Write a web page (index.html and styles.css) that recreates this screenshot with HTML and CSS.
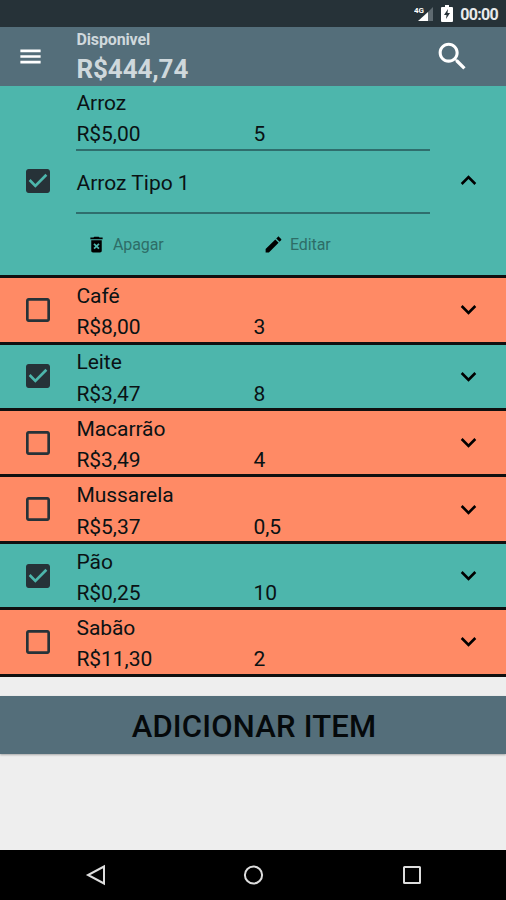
FILE: index.html
```
<!DOCTYPE html>
<html lang="pt-BR">

<head>
    <meta charset="UTF-8">
    <meta name="viewport" content="width=device-width, initial-scale=1.0">
    <title>Lista de Compras</title>
    <link rel="stylesheet" href="styles.css">
</head>

<body>
    <!-- Shared icons -->
    <svg class="sprite" width="0" height="0">
        <symbol id="box" viewBox="0 0 24 24"><path d="M19 5v14H5V5h14m0-2H5c-1.1 0-2 .9-2 2v14c0 1.1.9 2 2 2h14c1.1 0 2-.9 2-2V5c0-1.1-.9-2-2-2z"/></symbol>
        <symbol id="box-checked" viewBox="0 0 24 24"><path d="M19 3H5c-1.11 0-2 .9-2 2v14c0 1.1.89 2 2 2h14c1.11 0 2-.9 2-2V5c0-1.1-.89-2-2-2zm-9 14l-5-5 1.41-1.41L10 14.17l7.59-7.59L19 8l-9 9z"/></symbol>
        <symbol id="more" viewBox="0 0 24 24"><path d="M16.59 8.59L12 13.17 7.41 8.59 6 10l6 6 6-6z"/></symbol>
        <symbol id="less" viewBox="0 0 24 24"><path d="M12 8l-6 6 1.41 1.41L12 10.83l4.59 4.58L18 14z"/></symbol>
    </svg>

    <div class="status-bar">
        <svg class="signal" width="20" height="16" viewBox="0 0 20 16">
            <path d="M19 1v14h-5V6z" fill="#5f6a70"/>
            <path d="M14 6v9H4z" fill="#fff"/>
            <text x="0" y="7" class="network">4G</text>
        </svg>
        <svg class="battery" width="12" height="17" viewBox="0 0 12 17">
            <path d="M4 0h4v2h3q1 0 1 1v13q0 1-1 1H1q-1 0-1-1V3q0-1 1-1h3z" fill="#fff"/>
            <path d="M7 4L3 10h2.500l-.5 4 4-6H6.500z" fill="#263238"/>
        </svg>
        <span class="clock">00:00</span>
    </div>

    <div class="toolbar">
        <svg class="menu-icon" width="27" height="27" viewBox="0 0 24 24"><path d="M3 18.200h18v-2.400H3v2.400zm0-5h18v-2.400H3v2.400zm0-7.400v2.400h18V5.800H3z"/></svg>
        <div class="balance">
            <div class="balance-label">Disponivel</div>
            <div class="balance-value">R$444,74</div>
        </div>
        <svg class="search-icon" width="37" height="37" viewBox="0 0 24 24"><path d="M15.500 14h-.79l-.28-.27C15.410 12.590 16 11.110 16 9.500 16 5.910 13.090 3 9.500 3S3 5.910 3 9.500 5.910 16 9.500 16c1.610 0 3.090-.59 4.230-1.570l.27.28v.79l5 4.990L20.490 19l-4.990-5zm-6 0C7.010 14 5 11.990 5 9.500S7.010 5 9.500 5 14 7.010 14 9.500 11.990 14 9.500 14z"/></svg>
    </div>

    <div class="list">
        <div class="item checked expanded">
            <svg class="checkbox"><use href="#box-checked"/></svg>
            <div class="info">
                <div class="name">Arroz</div>
                <div class="values"><span>R$5,00</span><span>5</span></div>
                <div class="description">Arroz Tipo 1</div>
                <div class="actions">
                    <div class="action">
                        <svg width="21" height="21" viewBox="0 0 24 24"><path d="M6 19c0 1.100.9 2 2 2h8c1.100 0 2-.9 2-2V7H6v12zm2.460-7.120l1.410-1.410L12 12.590l2.120-2.120 1.410 1.410L13.410 14l2.120 2.120-1.410 1.410L12 15.410l-2.120 2.120-1.410-1.410L10.590 14l-2.130-2.120zM15.500 4l-1-1h-5l-1 1H5v2h14V4z"/></svg>
                        <span>Apagar</span>
                    </div>
                    <div class="action">
                        <svg width="21" height="21" viewBox="0 0 24 24"><path d="M3 17.250V21h3.750L17.810 9.940l-3.750-3.750L3 17.250zM20.710 7.040c.39-.39.39-1.020 0-1.410l-2.340-2.340c-.39-.39-1.020-.39-1.410 0l-1.830 1.830 3.750 3.750 1.830-1.830z"/></svg>
                        <span>Editar</span>
                    </div>
                </div>
            </div>
            <svg class="arrow"><use href="#less"/></svg>
        </div>

        <div class="item">
            <svg class="checkbox"><use href="#box"/></svg>
            <div class="info">
                <div class="name">Café</div>
                <div class="values"><span>R$8,00</span><span>3</span></div>
            </div>
            <svg class="arrow"><use href="#more"/></svg>
        </div>

        <div class="item checked">
            <svg class="checkbox"><use href="#box-checked"/></svg>
            <div class="info">
                <div class="name">Leite</div>
                <div class="values"><span>R$3,47</span><span>8</span></div>
            </div>
            <svg class="arrow"><use href="#more"/></svg>
        </div>

        <div class="item">
            <svg class="checkbox"><use href="#box"/></svg>
            <div class="info">
                <div class="name">Macarrão</div>
                <div class="values"><span>R$3,49</span><span>4</span></div>
            </div>
            <svg class="arrow"><use href="#more"/></svg>
        </div>

        <div class="item">
            <svg class="checkbox"><use href="#box"/></svg>
            <div class="info">
                <div class="name">Mussarela</div>
                <div class="values"><span>R$5,37</span><span>0,5</span></div>
            </div>
            <svg class="arrow"><use href="#more"/></svg>
        </div>

        <div class="item checked">
            <svg class="checkbox"><use href="#box-checked"/></svg>
            <div class="info">
                <div class="name">Pão</div>
                <div class="values"><span>R$0,25</span><span>10</span></div>
            </div>
            <svg class="arrow"><use href="#more"/></svg>
        </div>

        <div class="item">
            <svg class="checkbox"><use href="#box"/></svg>
            <div class="info">
                <div class="name">Sabão</div>
                <div class="values"><span>R$11,30</span><span>2</span></div>
            </div>
            <svg class="arrow"><use href="#more"/></svg>
        </div>
    </div>

    <button class="add-button">ADICIONAR ITEM</button>

    <div class="nav-bar">
        <svg width="24" height="24" viewBox="0 0 24 24"><path d="M20 3.500v17L4 12z"/></svg>
        <svg width="24" height="24" viewBox="0 0 24 24"><circle cx="11.500" cy="12" r="8.600"/></svg>
        <svg width="24" height="24" viewBox="0 0 24 24"><rect x="4" y="4" width="16" height="16" rx="0.500"/></svg>
    </div>
</body>

</html>
```
FILE: styles.css
```
body {
    margin: 0;
    height: 900px;
    display: flex;
    flex-direction: column;
    overflow: hidden;
    font-family: Roboto, sans-serif;
    background-color: #eeeeee;
    color: #0a1214;
}

svg {
    display: block;
    flex-shrink: 0;
}

.sprite {
    position: absolute;
}

.status-bar {
    height: 27px;
    box-sizing: border-box;
    padding-right: 8px;
    display: flex;
    align-items: center;
    justify-content: flex-end;
    background-color: #263238;
}

.signal {
    margin: 1px 7px 0 0;
}

.network {
    font-size: 8px;
    font-weight: bold;
    fill: #ffffff;
}

.battery {
    margin: 0 7px 1px 0;
}

.clock {
    padding-top: 2px;
    font-size: 16px;
    line-height: 25px;
    font-weight: 700;
    letter-spacing: -0.7px;
    color: #e8eaeb;
}

.toolbar {
    height: 59px;
    display: flex;
    align-items: center;
    background-color: #546e7a;
}

.toolbar svg {
    fill: #ffffff;
}

.menu-icon {
    margin-left: 16.500px;
}

.balance {
    flex: 1;
    margin-left: 33px;
    font-weight: bold;
    color: #cfd8dc;
}

.balance-label {
    font-size: 16px;
    line-height: 23px;
    letter-spacing: -0.15px;
}

.balance-value {
    margin-top: 1px;
    font-size: 26px;
    line-height: 34px;
    letter-spacing: -0.1px;
}

.search-icon {
    margin: 0 35px 1px 0;
}

.item {
    height: 66.400px;
    box-sizing: border-box;
    display: flex;
    align-items: center;
    border-bottom: 3px solid #101010;
    background-color: #ff8a65;
}

.item.checked {
    background-color: #4db6ac;
}

.item.expanded {
    height: 192.300px;
}

.checkbox {
    width: 32px;
    height: 32px;
    margin-left: 22.300px;
    fill: #263238;
}

.info {
    width: 354px;
    align-self: flex-start;
    margin-left: 22.200px;
    padding-top: 2.700px;
    font-size: 21px;
    line-height: 31.500px;
    letter-spacing: -0.06px;
}

.expanded .info {
    padding-top: 1.500px;
}

.values {
    display: grid;
    grid-template-columns: 1fr 1fr;
}

.expanded .values,
.description {
    border-bottom: 2px solid #2f6e6d;
}

.expanded .values {
    height: 30px;
}

.description {
    height: 61px;
    line-height: 64px;
    letter-spacing: 0;
}

.actions {
    display: grid;
    grid-template-columns: 1fr 1fr;
    margin-top: 15px;
}

.action {
    display: flex;
    align-items: center;
    gap: 5.500px;
    padding-left: 10px;
    font-size: 16px;
    letter-spacing: -0.1px;
    color: #2e6d67;
}

.arrow {
    width: 31px;
    height: 31px;
    margin-left: 22.500px;
}

.add-button {
    height: 58px;
    flex-shrink: 0;
    margin-top: 19.500px;
    padding: 2px 0 0 2px;
    border: none;
    font-family: inherit;
    font-size: 31px;
    font-weight: 500;
    letter-spacing: 0.2px;
    color: #05090b;
    background-color: #546e7a;
    box-shadow: 0 1px 2px rgba(0, 0, 0, 0.3);
}

.nav-bar {
    height: 50px;
    margin-top: auto;
    display: flex;
    align-items: center;
    justify-content: space-between;
    padding: 0 82px 0 83.500px;
    background-color: #000000;
}

.nav-bar svg {
    fill: none;
    stroke: #dddddd;
    stroke-width: 2;
}
```
